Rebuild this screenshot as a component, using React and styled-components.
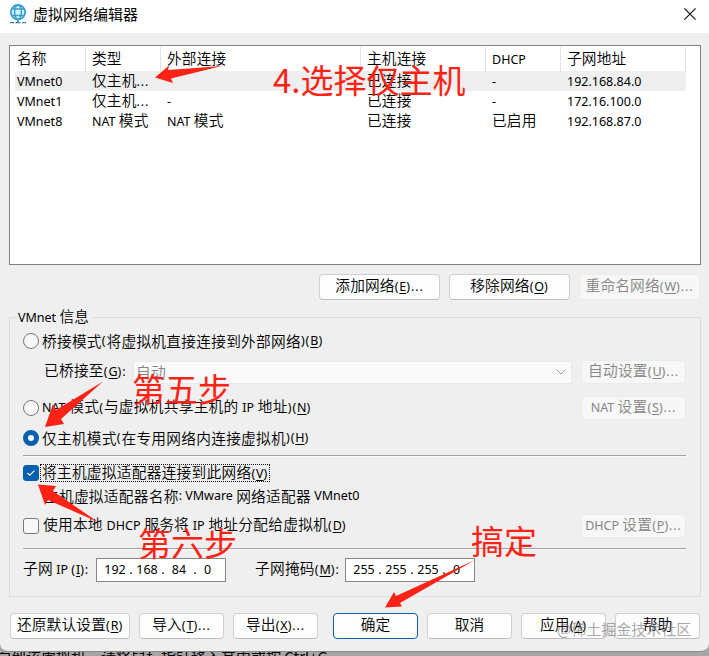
import React from "react";
import styled, { createGlobalStyle, css } from "styled-components";

const colors = {
  face: "#efefef",
  line: "#dcdcdc",
  rule: "#a0a0a0",
  text: "#000",
  disabled: "#858585",
  accent: "#0560b0",
  mark: "#fb2316",
};

const columns = ["名称", "类型", "外部连接", "主机连接", "DHCP", "子网地址"];

const networks = [
  ["VMnet0", "仅主机...", "", "已连接", "-", "192.168.84.0"],
  ["VMnet1", "仅主机...", "-", "已连接", "-", "172.16.100.0"],
  ["VMnet8", "NAT 模式", "NAT 模式", "已连接", "已启用", "192.168.87.0"],
];

// Chinese runs are set larger than latin ones, "&X" underlines the access key
function Label({ children }) {
  return children
    .split(/([\u4e00-\u9fff]+|&[A-Z]|[()]+|\.{3})/)
    .filter(Boolean)
    .map((part, i) => {
      if (part[0] === "&") return <Key key={i}>{part[1]}</Key>;
      if (/[\u4e00-\u9fff]/.test(part)) return <Cjk key={i}>{part}</Cjk>;
      if (/^([()]+|\.{3})$/.test(part)) return <Punct key={i}>{part}</Punct>;
      return part;
    });
}

function NetworkTable() {
  return (
    <Table>
      <HeaderRow>
        {columns.map((name) => (
          <HeaderCell key={name}>
            <Label>{name}</Label>
          </HeaderCell>
        ))}
      </HeaderRow>
      {networks.map((cells, row) => (
        <Row key={cells[0]} $selected={row === 0}>
          {cells.map((cell, i) => (
            <Cell key={i}>
              <Label>{cell}</Label>
            </Cell>
          ))}
        </Row>
      ))}
    </Table>
  );
}

function AddressInput({ parts }) {
  return (
    <Address>
      {parts.map((part, i) => (
        <React.Fragment key={i}>
          {i > 0 && <Dot>.</Dot>}
          <Octet>{part}</Octet>
        </React.Fragment>
      ))}
    </Address>
  );
}

function GlobeIcon() {
  return (
    <Globe viewBox="0 0 18 20" fill="none" stroke="#3a9fcb">
      <circle cx="9" cy="8.2" r="7.2" fill="#d6f0f8" strokeWidth="1.8" />
      <ellipse cx="9" cy="8.2" rx="3.4" ry="7.2" strokeWidth="1.5" />
      <path d="M9 15v3M2.600 5h12.800M3 11.500h12" strokeWidth="1.700" />
      <path d="M1 18.600h4M6.500 18.600h5M13 18.600h4" stroke="#38829e" strokeWidth="1.400" />
    </Globe>
  );
}

function App() {
  return (
    <Screen>
      <GlobalStyle />
      <Dialog>
        <TitleBar>
          <GlobeIcon />
          <Title>虚拟网络编辑器</Title>
          <Close viewBox="0 0 12 12">
            <path d="M.4.4l11.2 11.2M11.6.4L.4 11.6" stroke="#151515" strokeWidth="1.2" />
          </Close>
        </TitleBar>
        <Body>
          <NetworkTable />
          <TableActions>
            <Button $width={121}><Label>添加网络(&E)...</Label></Button>
            <Button $width={121}><Label>移除网络(&O)</Label></Button>
            <Button $width={121} disabled><Label>重命名网络(&W)...</Label></Button>
          </TableActions>

          <Group>
            <Legend><Label>VMnet 信息</Label></Legend>
            <Line $height={24} $top={11}>
              <Radio />
              <Label>桥接模式(将虚拟机直接连接到外部网络)(&B)</Label>
            </Line>
            <Line $height={24} $top={7}>
              <BridgeLabel><Label>已桥接至(&G):</Label></BridgeLabel>
              <Select>
                <Label>自动</Label>
                <Chevron viewBox="0 0 10 6">
                  <path d="M.5.5L5 5 9.500.5" fill="none" stroke="#9a9a9a" />
                </Chevron>
              </Select>
              <Button $width={105} $height={24} disabled><Label>自动设置(&U)...</Label></Button>
            </Line>
            <Line $height={24} $top={12}>
              <Radio />
              <Grow><Label>NAT 模式(与虚拟机共享主机的 IP 地址)(&N)</Label></Grow>
              <Button $width={105} $height={24} disabled><Label>NAT 设置(&S)...</Label></Button>
            </Line>
            <Line $height={24} $top={6}>
              <Radio $checked />
              <Label>仅主机模式(在专用网络内连接虚拟机)(&H)</Label>
            </Line>
            <Rule $top={5} />
            <Line $height={22} $top={5}>
              <Checkbox $checked>
                <svg width="8" height="6" viewBox="0 0 8 6">
                  <path d="M.5 3l2.2 2.2L7.500.6" fill="none" stroke="#fff" strokeWidth="1.1" />
                </svg>
              </Checkbox>
              <Focus><Label>将主机虚拟适配器连接到此网络(&V)</Label></Focus>
            </Line>
            <Line $height={20} $top={2} $indent={21}>
              <Label>主机虚拟适配器名称: VMware 网络适配器 VMnet0</Label>
            </Line>
            <Line $height={24} $top={8}>
              <Checkbox />
              <Grow><Label>使用本地 DHCP 服务将 IP 地址分配给虚拟机(&D)</Label></Grow>
              <Button $width={105} $height={24} disabled><Label>DHCP 设置(&P)...</Label></Button>
            </Line>
            <Rule $top={10} />
            <Line $height={24} $top={8}>
              <SubnetLabel><Label>子网 IP (&I):</Label></SubnetLabel>
              <AddressInput parts={[192, 168, 84, 0]} />
              <MaskLabel><Label>子网掩码(&M):</Label></MaskLabel>
              <AddressInput parts={[255, 255, 255, 0]} />
            </Line>
          </Group>

          <Footer>
            <Button $width={120}><Label>还原默认设置(&R)</Label></Button>
            <Button $width={85}><Label>导入(&T)...</Label></Button>
            <Button $width={85}><Label>导出(&X)...</Label></Button>
            <Button $width={85} $primary><Label>确定</Label></Button>
            <Button $width={85}><Label>取消</Label></Button>
            <Button $width={85}><Label>应用(&A)</Label></Button>
            <Button $width={85}><Label>帮助</Label></Button>
          </Footer>
        </Body>
      </Dialog>
      <StatusText>向到该虚拟机，请将鼠标指针移入其中或按 Ctrl+G。</StatusText>

      <Arrows viewBox="0 0 709 656" fill={colors.mark}>
        <path d="M155 77.500L169 65.500 168 70 222 66 171 78.500 173 83Z" />
        <path d="M45 427L53 404 56 410 103 381.500 61 419 64 424Z" />
        <path d="M38 484.500L56 486 53 491 98 522 48 500 45 505Z" />
        <path d="M385 607.500L394 592 396 596 475 560 400 603 402 606.500Z" />
      </Arrows>
      <Note $x={273} $y={60}>4.选择仅主机</Note>
      <Note $x={132} $y={369}>第五步</Note>
      <Note $x={138} $y={523}>第六步</Note>
      <Note $x={471} $y={521}>搞定</Note>
      <Watermark>@稀土掘金技术社区</Watermark>
    </Screen>
  );
}

const GlobalStyle = createGlobalStyle`
  * {
    box-sizing: border-box;
  }
  body {
    margin: 0;
    overflow: hidden;
  }
`;

const Screen = styled.div`
  position: relative;
  width: 709px;
  height: 656px;
  overflow: hidden;
  background: #a6a6a6;
  color: ${colors.text};
  font-family: "Noto Sans", "Noto Sans CJK SC", sans-serif;
  font-size: 12.5px;
  white-space: nowrap;
`;

const Dialog = styled.div`
  display: flex;
  flex-direction: column;
  height: 652px;
  overflow: hidden;
  background: ${colors.face};
  border-bottom: 1px solid #8c8c8c;
  border-radius: 0 0 8px 8px;
`;

const TitleBar = styled.div`
  display: flex;
  align-items: center;
  height: 33px;
  flex-shrink: 0;
  padding: 0 13px 5px 9px;
  background: #fff;
`;

const Title = styled.span`
  flex: 1;
  margin-left: 6px;
  font-family: "Noto Sans CJK SC", sans-serif;
  font-size: 15px;
  line-height: 20px;
`;

const Globe = styled.svg`
  width: 18px;
  height: 20px;
`;

const Close = styled.svg`
  width: 12px;
  height: 12px;
`;

const Body = styled.div`
  padding: 12px 8px 0 9px;
`;

const Cjk = styled.span`
  font-family: "Noto Sans CJK SC", sans-serif;
  font-size: 14.7px;
  font-weight: 350;
  letter-spacing: 0.15px;
  line-height: 1;
`;

const Punct = styled.span`
  letter-spacing: 0.9px;
`;

const Key = styled.span`
  text-decoration: underline;
  text-underline-offset: 2px;
`;

const Table = styled.div`
  height: 220px;
  padding: 1px 14px 0 5px;
  background: #fff;
  border: 1px solid #828282;
`;

const HeaderRow = styled.div`
  display: grid;
  grid-template-columns: 71px 75px 200px 125px 75px 125px;
  height: 24px;
`;

const HeaderCell = styled.div`
  padding-left: 6px;
  border-right: 1px solid #e2e2e2;
  line-height: 25px;

  &:first-child {
    padding-left: 2px;
  }
`;

const Row = styled(HeaderRow)`
  height: 20px;
  background: ${(props) => (props.$selected ? colors.face : "transparent")};
`;

const Cell = styled.div`
  padding-left: 6px;
  line-height: 22px;

  &:first-child {
    padding-left: 2px;
  }
`;

const TableActions = styled.div`
  display: flex;
  justify-content: flex-end;
  gap: 9px;
  margin: 9px 1px 0 0;
`;

const Button = styled.button`
  display: block;
  flex-shrink: 0;
  width: ${(props) => props.$width}px;
  height: ${(props) => props.$height || 26}px;
  padding: 0;
  background: #fdfdfd;
  border: 1px solid #d0d0d0;
  border-bottom-color: #bdbdbd;
  border-radius: 4px;
  color: ${colors.text};
  font: inherit;
  line-height: 22px;
  text-align: center;
  white-space: nowrap;

  ${(props) =>
    props.$primary &&
    css`
      border-color: ${colors.accent};
    `}

  &:disabled {
    background: #f7f7f7;
    border-color: #ebebeb;
    color: ${colors.disabled};
  }
`;

const Group = styled.div`
  height: 280px;
  margin-top: 17px;
  padding: 0 14px 0 13px;
  border: 1px solid ${colors.line};
`;

const Legend = styled.div`
  width: fit-content;
  height: 20px;
  margin: -11px 0 -9px -7px;
  padding: 0 3px 0 2px;
  background: ${colors.face};
  line-height: 21px;
`;

const Line = styled.div`
  display: flex;
  align-items: center;
  height: ${(props) => props.$height}px;
  margin-top: ${(props) => props.$top}px;
  padding-left: ${(props) => props.$indent || 0}px;
  line-height: 20px;
  white-space: pre;

  ${Cjk} {
    letter-spacing: 0.27px;
  }
`;

const Grow = styled.span`
  flex: 1;
  word-spacing: 0.5px;
`;

const Radio = styled.span`
  flex-shrink: 0;
  width: 16px;
  height: 16px;
  margin-right: 3px;
  background: #f8f8f8;
  border: ${(props) => (props.$checked ? `5px solid ${colors.accent}` : "1px solid #777")};
  border-radius: 50%;
`;

const Checkbox = styled.span`
  display: flex;
  align-items: center;
  justify-content: center;
  flex-shrink: 0;
  width: 16px;
  height: 16px;
  margin-right: 4px;
  background: ${(props) => (props.$checked ? colors.accent : "#f8f8f8")};
  border: 1px solid ${(props) => (props.$checked ? colors.accent : "#777")};
  border-radius: 3px;
`;

const Focus = styled.span`
  height: 16px;
  margin-left: -2px;
  padding: 0 1px;
  outline: 1px dotted #111;
  line-height: 16px;
`;

const BridgeLabel = styled.span`
  width: 110px;
  padding-left: 21px;
`;

const Select = styled.div`
  display: flex;
  align-items: center;
  justify-content: space-between;
  flex: 1;
  height: 23px;
  margin-right: 9px;
  padding: 0 5px 0 2px;
  background: #fafafa;
  border: 1px solid #e9e9e9;
  color: ${colors.disabled};
`;

const Chevron = styled.svg`
  width: 10px;
  height: 6px;
`;

const Rule = styled.div`
  height: 2px;
  margin-top: ${(props) => props.$top}px;
  background: #fafafa;
  border-top: 1px solid ${colors.rule};
`;

const SubnetLabel = styled.span`
  width: 73px;
`;

const MaskLabel = styled.span`
  width: 119px;
  padding-left: 29px;
`;

const Address = styled.div`
  display: flex;
  width: 130px;
  height: 24px;
  padding-left: 6px;
  background: #fff;
  border: 1px solid #868686;
  line-height: 21px;
`;

const Octet = styled.span`
  width: 24px;
  text-align: center;

  &:last-child {
    width: 17px;
  }
`;

const Dot = styled.span`
  width: 8px;
  text-align: center;
`;

const Footer = styled.div`
  display: flex;
  gap: 9px;
  margin: 16px 0 0 1px;

  ${Button}:nth-child(4) {
    margin-left: 6px;
  }
`;

// strip of the window behind the dialog
const StatusText = styled.div`
  height: 4px;
  margin-left: -4px;
  overflow: hidden;
  font-family: "Noto Sans CJK SC", sans-serif;
  font-size: 15px;
  line-height: 10px;
`;

const Arrows = styled.svg`
  position: absolute;
  inset: 0;
  width: 709px;
  height: 656px;
`;

const Note = styled.div`
  position: absolute;
  left: ${(props) => props.$x}px;
  top: ${(props) => props.$y}px;
  color: ${colors.mark};
  font-family: "Noto Sans CJK SC", sans-serif;
  font-size: 33px;
  font-weight: 400;
  line-height: 38px;
`;

const Watermark = styled.div`
  position: absolute;
  left: 557px;
  top: 619px;
  color: rgba(110, 110, 110, 0.6);
  font-family: "Noto Sans CJK SC", sans-serif;
  font-size: 15px;
  line-height: 20px;
`;

export default App;
